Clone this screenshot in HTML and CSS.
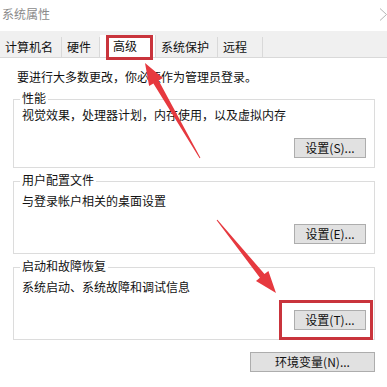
FILE: index.html
```html
<!DOCTYPE html>
<html lang="zh-CN">
<head>
<meta charset="utf-8">
<title>系统属性</title>
<link rel="stylesheet" href="styles.css">
</head>
<body>
<div class="window">
  <div class="titlebar">
    <span class="title">系统属性</span>
    <svg class="close" width="8" height="13" viewBox="0 0 8 13"><polyline points="1,0.5 7.5,6.5 1,12.5" fill="none" stroke="#b5b5b5" stroke-width="1"/></svg>
  </div>
  <div class="tabstrip">
    <div class="tab">计算机名</div>
    <div class="tab">硬件</div>
    <div class="tab tab--active">高级</div>
    <div class="tab">系统保护</div>
    <div class="tab">远程</div>
  </div>
  <div class="content">
    <p class="notice">要进行大多数更改，你必须作为管理员登录。</p>
    <fieldset class="group group--compact">
      <legend>性能</legend>
      <p class="desc">视觉效果，处理器计划，内存使用，以及虚拟内存</p>
      <div class="actions"><button class="btn">设置(S)...</button></div>
    </fieldset>
    <fieldset class="group">
      <legend>用户配置文件</legend>
      <p class="desc">与登录帐户相关的桌面设置</p>
      <div class="actions"><button class="btn">设置(E)...</button></div>
    </fieldset>
    <fieldset class="group">
      <legend>启动和故障恢复</legend>
      <p class="desc">系统启动、系统故障和调试信息</p>
      <div class="actions"><button class="btn">设置(T)...</button></div>
    </fieldset>
    <div class="footer"><button class="btn btn--wide">环境变量(N)...</button></div>
  </div>
  <svg class="annotations" width="387" height="387" viewBox="0 0 387 387">
    <rect x="107.5" y="36.5" width="44" height="22" fill="none" stroke="#c9343c" stroke-width="3"/>
    <rect x="280.5" y="301.5" width="91" height="37" fill="none" stroke="#c9343c" stroke-width="3"/>
    <polygon points="145,63 162.9,78 158.6,80.5 200.4,157.8 199.6,158.2 153.4,83.5 149.1,86" fill="#e6393f"/>
    <polygon points="276,293 268.4,270.9 264.5,274 217.4,219.7 216.6,220.3 259.9,277.8 256,280.9" fill="#e6393f"/>
  </svg>
</div>
</body>
</html>
```

FILE: styles.css
```css
html, body {
  margin: 0;
  padding: 0;
}

body {
  width: 387px;
  height: 387px;
  overflow: hidden;
  background: #ffffff;
  font-family: "Noto Sans CJK SC", "Noto Sans", sans-serif;
  font-size: 12px;
  color: #111111;
}

.window {
  position: relative;
  width: 387px;
  height: 387px;
}

.titlebar {
  display: flex;
  justify-content: space-between;
  align-items: flex-start;
  height: 31px;
  box-sizing: border-box;
  padding: 7px 0 0 2px;
}

.title {
  line-height: 14px;
  color: #8a8a8a;
}

.close {
  margin-top: 1px;
  display: block;
}

.tabstrip {
  display: flex;
  align-items: flex-end;
  height: 27px;
  box-sizing: border-box;
  background: #f0f0f0;
  border-bottom: 1px solid #d9d9d9;
}

.tab {
  height: 20px;
  line-height: 20px;
  padding: 0 8px 0 5px;
  border-right: 1px solid #d9d9d9;
  white-space: nowrap;
}

.tab--active {
  height: 22px;
  line-height: 22px;
  padding: 0 18px 0 13px;
  background: #ffffff;
}

.tab:last-child {
  padding-right: 15px;
}

.content {
  padding: 12px 12px 0 13px;
}

.notice {
  margin: 0 0 7px 4px;
  line-height: 14px;
}

.group {
  margin: 5px 0 0;
  padding: 0 8px 9px;
  border: 1px solid #dcdcdc;
  min-width: 0;
}

.group:first-of-type {
  margin-top: 0;
}

.group legend {
  padding: 0 2px 2px;
  margin-left: -2px;
  line-height: 14px;
}

.desc {
  margin: 5px 0 0;
  line-height: 14px;
}

.group--compact .desc {
  margin-top: 1px;
}

.actions {
  display: flex;
  justify-content: flex-end;
  margin-top: 16px;
}

.btn {
  width: 72px;
  height: 20px;
  padding: 0;
  font-family: inherit;
  font-size: 12px;
  line-height: 18px;
  color: #111111;
  background: #e1e1e1;
  border: 1px solid #adadad;
  border-radius: 0;
}

.btn--wide {
  width: 125px;
}

.footer {
  display: flex;
  justify-content: flex-end;
  margin-top: 12px;
}

.annotations {
  position: absolute;
  left: 0;
  top: 0;
  pointer-events: none;
}
```
